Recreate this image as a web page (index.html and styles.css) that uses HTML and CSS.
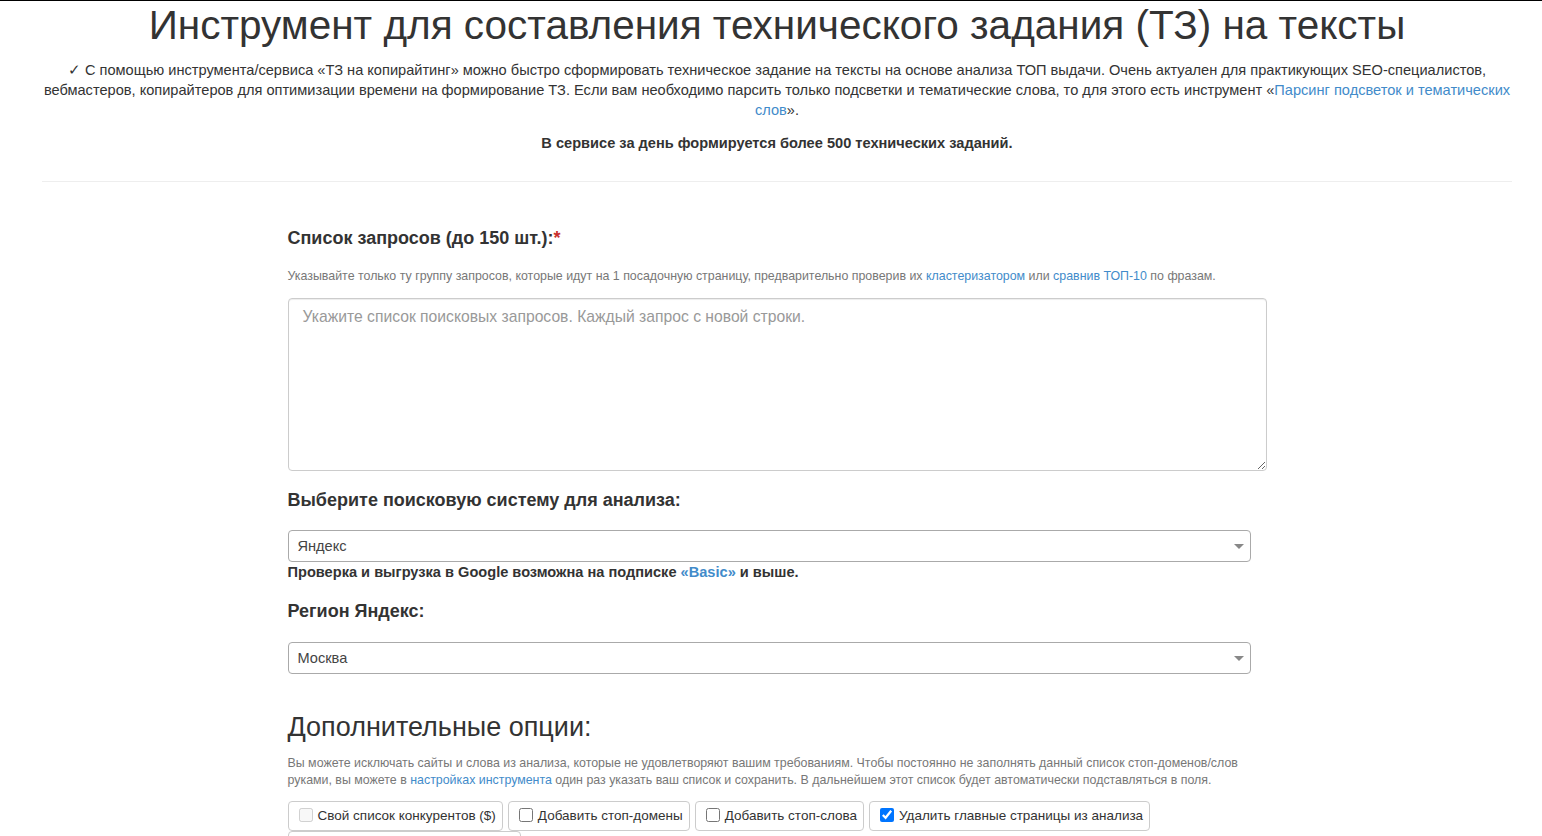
FILE: index.html
```html
<!DOCTYPE html>
<html lang="ru">
<head>
    <meta charset="UTF-8">
    <meta name="viewport" content="width=device-width, initial-scale=1.0">
    <title>ТЗ на копирайтинг</title>
    <link rel="stylesheet" href="styles.css">
</head>
<body>
    <div class="topline"></div>
    <div class="container">
        <h1 class="page-title">Инструмент для составления технического задания (ТЗ) на тексты</h1>
        <p class="intro">&#10003; С помощью инструмента/сервиса «ТЗ на копирайтинг» можно быстро сформировать техническое задание на тексты на основе анализа ТОП выдачи. Очень актуален для практикующих SEO-специалистов, вебмастеров, копирайтеров для оптимизации времени на формирование ТЗ. Если вам необходимо парсить только подсветки и тематические слова, то для этого есть инструмент «<a href="#">Парсинг подсветок и тематических слов</a>».</p>
        <p class="stat">В сервисе за день формируется более 500 технических заданий.</p>
        <hr class="divider">

        <form class="tz-form" id="tzForm">
            <div class="form-section">
                <label class="field-label" for="queries">Список запросов (до 150 шт.):<span class="req">*</span></label>
                <p class="hint">Указывайте только ту группу запросов, которые идут на 1 посадочную страницу, предварительно проверив их <a href="#">кластеризатором</a> или <a href="#">сравнив ТОП-10</a> по фразам.</p>
                <textarea id="queries" class="queries" placeholder="Укажите список поисковых запросов. Каждый запрос с новой строки."></textarea>
            </div>

            <div class="form-section">
                <label class="field-label" for="engine">Выберите поисковую систему для анализа:</label>
                <div class="select-wrap">
                    <select id="engine">
                        <option selected>Яндекс</option>
                        <option>Google</option>
                    </select>
                </div>
                <p class="note">Проверка и выгрузка в Google возможна на подписке <a href="#">«Basic»</a> и выше.</p>
            </div>

            <div class="form-section">
                <label class="field-label region-label" for="region">Регион Яндекс:</label>
                <div class="select-wrap">
                    <select id="region">
                        <option selected>Москва</option>
                        <option>Санкт-Петербург</option>
                    </select>
                </div>
            </div>

            <div class="form-section options">
                <h2 class="options-title">Дополнительные опции:</h2>
                <p class="hint">Вы можете исключать сайты и слова из анализа, которые не удовлетворяют вашим требованиям. Чтобы постоянно не заполнять данный список стоп-доменов/слов<br>руками, вы можете в <a href="#">настройках инструмента</a> один раз указать ваш список и сохранить. В дальнейшем этот список будет автоматически подставляться в поля.</p>
                <div class="option-list">
                    <label class="option-btn"><input type="checkbox" disabled> Свой список конкурентов ($)</label>
                    <label class="option-btn"><input type="checkbox"> Добавить стоп-домены</label>
                    <label class="option-btn"><input type="checkbox"> Добавить стоп-слова</label>
                    <label class="option-btn"><input type="checkbox" checked> Удалить главные страницы из анализа</label>
                    <label class="option-btn"><input type="checkbox"> Учитывать тематические слова</label>
                </div>
            </div>
        </form>
    </div>
</body>
</html>
```

FILE: styles.css
```css
body {
    margin: 0;
    padding: 0;
    background-color: #fff;
    color: #333;
    font-family: 'Liberation Sans', Arial, sans-serif;
    font-size: 14.6px;
    line-height: 20px;
}
a {
    color: #428bca;
    text-decoration: none;
}
.topline {
    height: 1px;
    background-color: #000;
}
.container {
    padding: 0 30px 0 42px;
}
.page-title {
    margin: 2px 0 13px;
    font-size: 40.5px;
    font-weight: normal;
    line-height: 44px;
    text-align: center;
    color: #333;
}
.intro {
    margin: 0 0 13px;
    text-align: center;
}
.stat {
    margin: 0;
    font-weight: bold;
    text-align: center;
}
.divider {
    margin: 28px 0 0;
    border: 0;
    border-top: 1px solid #eee;
}
.tz-form {
    width: 979px;
    margin: 0 auto;
    padding-top: 46px;
}
.form-section {
    margin-bottom: 19px;
}
.field-label {
    display: block;
    font-size: 18px;
    font-weight: bold;
    line-height: 20px;
    margin-bottom: 20px;
}
.region-label {
    margin-bottom: 21px;
}
.req {
    color: #c9302c;
}
.hint {
    margin: 0 0 13px;
    font-size: 12.4px;
    line-height: 17px;
    color: #777;
}
.queries {
    display: block;
    width: 100%;
    height: 173px;
    box-sizing: border-box;
    padding: 8px 14px;
    border: 1px solid #ccc;
    border-radius: 4px;
    box-shadow: inset 0 1px 1px rgba(0, 0, 0, 0.075);
    font-family: 'Liberation Sans', Arial, sans-serif;
    font-size: 15.7px;
    line-height: 20px;
    color: #333;
}
.queries::placeholder {
    color: #999;
}
.select-wrap {
    position: relative;
    width: 963px;
}
.select-wrap::after {
    content: "";
    position: absolute;
    right: 7px;
    top: 14px;
    border-left: 5px solid transparent;
    border-right: 5px solid transparent;
    border-top: 5px solid #888;
    pointer-events: none;
}
.select-wrap select {
    display: block;
    width: 100%;
    height: 32px;
    padding: 0 24px 0 9px;
    border: 1px solid #aaa;
    border-radius: 4px;
    background-color: #fff;
    appearance: none;
    -webkit-appearance: none;
    font-family: 'Liberation Sans', Arial, sans-serif;
    font-size: 14.6px;
    color: #444;
}
.note {
    margin: 0;
    font-weight: bold;
    line-height: 20px;
}
.note a {
    font-weight: bold;
}
.options {
    padding-top: 18px;
}
.options-title {
    margin: 0 0 12px;
    font-size: 27px;
    font-weight: normal;
    line-height: 32px;
}
.options .hint {
    margin-bottom: 12px;
}
.option-list {
    display: flex;
    flex-wrap: wrap;
    gap: 0 5px;
}
.option-btn {
    display: inline-flex;
    align-items: center;
    gap: 3px;
    height: 30px;
    box-sizing: border-box;
    padding: 0 6px 0 10px;
    border: 1px solid #ccc;
    border-radius: 4px;
    font-size: 13.5px;
    color: #333;
    cursor: pointer;
}
.option-btn input {
    margin: 0 2px 2px 0;
    width: 14px;
    height: 14px;
}
```
